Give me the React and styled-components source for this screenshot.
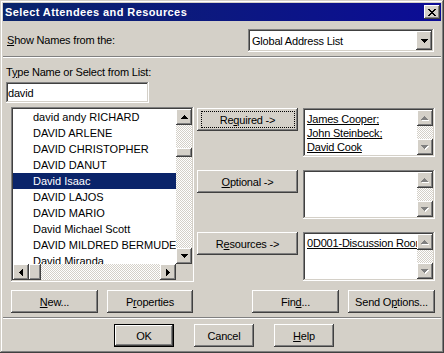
import React from 'react';
import styled, { createGlobalStyle, css } from 'styled-components';

const FACE = '#d4d0c8';

const Global = createGlobalStyle`
  html, body { margin: 0; padding: 0; background: ${FACE}; }
  body { font-family: "Liberation Sans", Arial, sans-serif; font-size: 11px; color: #000; }
  * { box-sizing: border-box; }
`;

const raised = css`
  box-shadow: inset -1px -1px #404040, inset 1px 1px #ffffff, inset -2px -2px #808080, inset 2px 2px ${FACE};
`;
const sunken = css`
  box-shadow: inset -1px -1px #ffffff, inset 1px 1px #808080, inset -2px -2px ${FACE}, inset 2px 2px #404040;
`;
const checker = css`
  background: repeating-conic-gradient(${FACE} 0 25%, #ffffff 0 50%) 0 0 / 2px 2px;
`;

const Window = styled.div`
  width: 444px;
  height: 353px;
  padding: 3px;
  background: ${FACE};
  box-shadow: inset -1px -1px #404040, inset 1px 1px ${FACE}, inset -2px -2px #808080, inset 2px 2px #ffffff;
  display: flex;
  flex-direction: column;
  letter-spacing: -0.2px;
`;

const TitleBar = styled.div`
  height: 18px;
  display: flex;
  align-items: center;
  padding: 0 1px 0 2px;
  background: linear-gradient(90deg, #0a246a 0%, #0c1880 50%, #0c0c96 100%);
`;

const TitleText = styled.div`
  color: #fff;
  font-weight: bold;
  font-size: 11px;
  letter-spacing: 0.4px;
  white-space: nowrap;
`;

const CloseButton = styled.div`
  margin-left: auto;
  width: 16px;
  height: 14px;
  background: ${FACE};
  ${raised};
  display: flex;
  align-items: center;
  justify-content: center;
  padding-right: 1px;
`;

const PixelSvg = styled.svg`
  display: block;
  shape-rendering: crispEdges;
`;

const X_PATTERN = ['XX....XX', '.XX..XX.', '..XXXX..', '...XX...', '..XXXX..', '.XX..XX.', 'XX....XX'];

function CloseGlyph() {
  const rects = [];
  X_PATTERN.forEach((row, y) =>
    row.split('').forEach((c, x) => {
      if (c === 'X') rects.push(<rect key={`${x}-${y}`} x={x} y={y} width={1} height={1} fill="#000" />);
    })
  );
  return (
    <PixelSvg width={8} height={7} viewBox="0 0 8 7">
      {rects}
    </PixelSvg>
  );
}

function Arrow({ dir = 'down', disabled = false }) {
  const rows = [7, 5, 3, 1];
  const horiz = dir === 'left' || dir === 'right';
  const build = (ox, oy, fill) =>
    rows.map((w, i) => {
      const off = (7 - w) / 2;
      let x, y, width, height;
      if (dir === 'down') { x = off; y = i; width = w; height = 1; }
      else if (dir === 'up') { x = off; y = 3 - i; width = w; height = 1; }
      else if (dir === 'right') { x = i; y = off; width = 1; height = w; }
      else { x = 3 - i; y = off; width = 1; height = w; }
      return <rect key={fill + i} x={x + ox} y={y + oy} width={width} height={height} fill={fill} />;
    });
  const w = (horiz ? 4 : 7) + (disabled ? 1 : 0);
  const h = (horiz ? 7 : 4) + (disabled ? 1 : 0);
  return (
    <PixelSvg width={w} height={h} viewBox={`0 0 ${w} ${h}`}>
      {disabled && build(1, 1, '#ffffff')}
      {build(0, 0, disabled ? '#808080' : '#000000')}
    </PixelSvg>
  );
}

const TopRow = styled.div`
  display: flex;
  align-items: center;
  justify-content: space-between;
  padding: 8px 7px 4px 4px;
`;

const Label = styled.div`
  line-height: 13px;
  white-space: nowrap;
  margin-left: ${(p) => p.$ml || 0}px;
  margin-top: ${(p) => p.$mt || 0}px;
`;

const Combo = styled.div`
  width: 186px;
  height: 23px;
  padding: 2px;
  background: #fff;
  ${sunken};
  display: flex;
  align-items: stretch;
`;

const ComboText = styled.div`
  flex: 1;
  padding-left: 2px;
  display: flex;
  align-items: center;
  white-space: nowrap;
`;

const ScrollButton = styled.div`
  width: 16px;
  height: ${(p) => p.$h || 16}px;
  flex: none;
  background: ${FACE};
  ${raised};
  display: flex;
  align-items: center;
  justify-content: center;
`;

const Separator = styled.div`
  margin-top: ${(p) => p.$mt || 0}px;
  height: 2px;
  border-top: 1px solid #808080;
  border-bottom: 1px solid #ffffff;
  flex: none;
`;

const NameInput = styled.input`
  display: block;
  margin: 3px 0 0 3px;
  width: 143px;
  height: 21px;
  border: none;
  outline: none;
  padding: 0 2px;
  background: #fff;
  font: inherit;
  letter-spacing: inherit;
  color: #000;
  ${sunken};
`;

const Main = styled.div`
  display: flex;
  gap: 3px;
  margin: 4px 0 0 8px;
`;

const ListBox = styled.div`
  width: 183px;
  height: 175px;
  padding: 2px;
  background: ${FACE};
  ${sunken};
  display: grid;
  grid-template-columns: 1fr 16px;
  grid-template-rows: 1fr 16px;
`;

const ListItems = styled.div`
  background: #fff;
  overflow: hidden;
`;

const ListItem = styled.div`
  height: 16px;
  line-height: 16px;
  padding-left: 20px;
  white-space: nowrap;
  overflow: hidden;
  letter-spacing: 0;
  background: ${(p) => (p.$selected ? '#0a246a' : 'transparent')};
  color: ${(p) => (p.$selected ? '#fff' : '#000')};
`;

const VScroll = styled.div`
  display: flex;
  flex-direction: column;
  height: 100%;
`;

const HScroll = styled.div`
  display: flex;
`;

const Track = styled.div`
  flex: 1;
  ${checker};
  display: flex;
  flex-direction: ${(p) => (p.$horizontal ? 'row' : 'column')};
`;

const Thumb = styled.div`
  flex: none;
  background: ${FACE};
  ${raised};
  width: ${(p) => (p.$horizontal ? '12px' : '16px')};
  height: ${(p) => (p.$horizontal ? '16px' : '9px')};
  margin-top: ${(p) => (p.$horizontal ? 0 : p.$offset)}px;
  margin-left: ${(p) => (p.$horizontal ? p.$offset : 0)}px;
`;

const Corner = styled.div`
  background: ${FACE};
`;

const Recipients = styled.div`
  display: grid;
  grid-template-columns: 101px 132px;
  grid-auto-rows: 49px;
  column-gap: 5px;
  row-gap: 13px;
  padding-top: 1px;
  align-items: start;
`;

const Button = styled.div`
  position: relative;
  width: ${(p) => p.$w}px;
  height: 23px;
  flex: none;
  background: ${FACE};
  display: flex;
  align-items: center;
  justify-content: center;
  white-space: nowrap;
  ${raised};
  ${(p) =>
    p.$default &&
    css`
      border: 1px solid #000;
    `}
  ${(p) =>
    p.$focus &&
    css`
      &::after {
        content: '';
        position: absolute;
        top: 3px;
        left: 4px;
        right: 3px;
        bottom: 3px;
        border: 1px dotted #000;
      }
    `}
`;

const RecipientBox = styled.div`
  height: 49px;
  padding: 2px;
  background: #fff;
  ${sunken};
  display: flex;
`;

const RecipientText = styled.div`
  flex: 1;
  min-width: 0;
  overflow: hidden;
  padding: 2px 0 0 2px;
  line-height: 14px;
`;

const Name = styled.div`
  white-space: nowrap;
  text-decoration: underline;
`;

const ActionRow = styled.div`
  display: flex;
  justify-content: space-between;
  margin-top: 8px;
  padding: 0 6px 0 8px;
`;

const ButtonGroup = styled.div`
  display: flex;
  gap: 9px;
`;

const DialogButtons = styled.div`
  display: flex;
  gap: 20px;
  margin-top: 5px;
  padding-left: 111px;
`;

const items = [
  'david andy RICHARD',
  'DAVID ARLENE',
  'DAVID CHRISTOPHER',
  'DAVID DANUT',
  'David Isaac',
  'DAVID LAJOS',
  'DAVID MARIO',
  'David Michael Scott',
  'DAVID MILDRED BERMUDEZ',
  'David Miranda',
];

function DisabledScroll() {
  return (
    <VScroll>
      <ScrollButton>
        <Arrow dir="up" disabled />
      </ScrollButton>
      <Track />
      <ScrollButton>
        <Arrow dir="down" disabled />
      </ScrollButton>
    </VScroll>
  );
}

export default function App() {
  return (
    <>
      <Global />
      <Window>
        <TitleBar>
          <TitleText>Select Attendees and Resources</TitleText>
          <CloseButton>
            <CloseGlyph />
          </CloseButton>
        </TitleBar>

        <TopRow>
          <Label>
            <u>S</u>how Names from the:
          </Label>
          <Combo>
            <ComboText>Global Address List</ComboText>
            <ScrollButton $h={19}>
              <Arrow dir="down" />
            </ScrollButton>
          </Combo>
        </TopRow>

        <Separator />

        <Label $ml={3} $mt={8}>
          T<u>y</u>pe Name or Select from List:
        </Label>
        <NameInput readOnly value="david" />

        <Main>
          <ListBox>
            <ListItems>
              {items.map((name, i) => (
                <ListItem key={name} $selected={i === 4}>
                  {name}
                </ListItem>
              ))}
            </ListItems>
            <VScroll>
              <ScrollButton>
                <Arrow dir="up" />
              </ScrollButton>
              <Track>
                <Thumb $offset={23} />
              </Track>
              <ScrollButton>
                <Arrow dir="down" />
              </ScrollButton>
            </VScroll>
            <HScroll>
              <ScrollButton>
                <Arrow dir="left" />
              </ScrollButton>
              <Track $horizontal>
                <Thumb $horizontal $offset={0} />
              </Track>
              <ScrollButton>
                <Arrow dir="right" />
              </ScrollButton>
            </HScroll>
            <Corner />
          </ListBox>

          <Recipients>
            <Button $w={101} $focus>
              Re<u>q</u>uired -&gt;
            </Button>
            <RecipientBox>
              <RecipientText>
                <Name>James Cooper;</Name>
                <Name>John Steinbeck;</Name>
                <Name>David Cook</Name>
              </RecipientText>
              <DisabledScroll />
            </RecipientBox>

            <Button $w={101}>
              <u>O</u>ptional -&gt;
            </Button>
            <RecipientBox>
              <RecipientText />
              <DisabledScroll />
            </RecipientBox>

            <Button $w={101}>
              R<u>e</u>sources -&gt;
            </Button>
            <RecipientBox>
              <RecipientText>
                <Name>0D001-Discussion Room</Name>
              </RecipientText>
              <DisabledScroll />
            </RecipientBox>
          </Recipients>
        </Main>

        <ActionRow>
          <ButtonGroup>
            <Button $w={87}>
              <u>N</u>ew...
            </Button>
            <Button $w={86}>
              P<u>r</u>operties
            </Button>
          </ButtonGroup>
          <ButtonGroup>
            <Button $w={87}>
              Fin<u>d</u>...
            </Button>
            <Button $w={87}>
              Send O<u>p</u>tions...
            </Button>
          </ButtonGroup>
        </ActionRow>

        <Separator $mt={4} />

        <DialogButtons>
          <Button $w={60} $default>
            OK
          </Button>
          <Button $w={60}>Cancel</Button>
          <Button $w={60}>
            <u>H</u>elp
          </Button>
        </DialogButtons>
      </Window>
    </>
  );
}
